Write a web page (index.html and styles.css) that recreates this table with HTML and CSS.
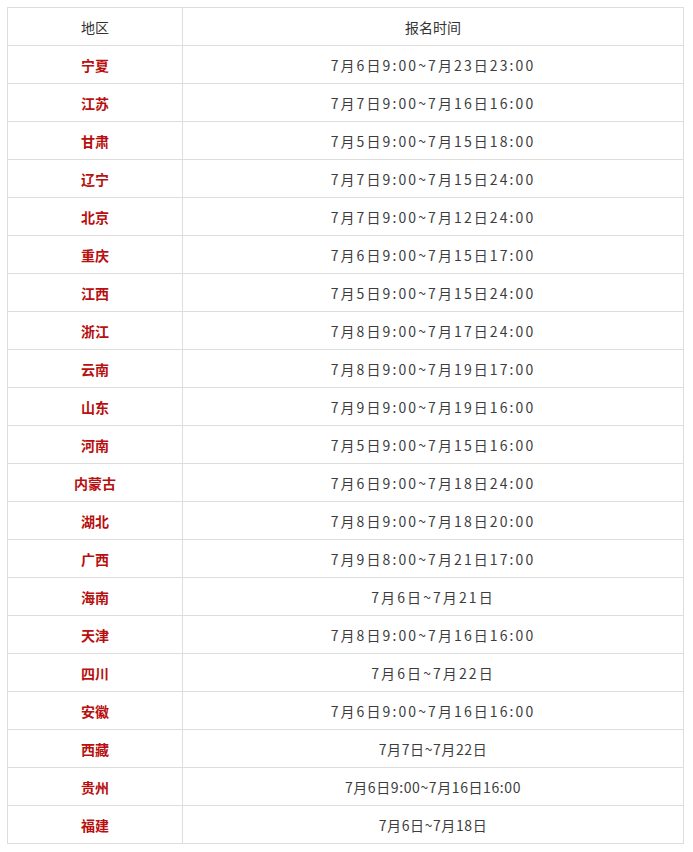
FILE: index.html
```html
<!DOCTYPE html>
<html lang="zh">
<head>
<meta charset="utf-8">
<link rel="stylesheet" href="styles.css">
</head>
<body>
<table class="tbl">
  <thead>
    <tr><th class="c-region">地区</th><th class="c-time">报名时间</th></tr>
  </thead>
  <tbody>
    <tr><td class="region">宁夏</td><td class="time">7月6日9:00~7月23日23:00</td></tr>
    <tr><td class="region">江苏</td><td class="time">7月7日9:00~7月16日16:00</td></tr>
    <tr><td class="region">甘肃</td><td class="time">7月5日9:00~7月15日18:00</td></tr>
    <tr><td class="region">辽宁</td><td class="time">7月7日9:00~7月15日24:00</td></tr>
    <tr><td class="region">北京</td><td class="time">7月7日9:00~7月12日24:00</td></tr>
    <tr><td class="region">重庆</td><td class="time">7月6日9:00~7月15日17:00</td></tr>
    <tr><td class="region">江西</td><td class="time">7月5日9:00~7月15日24:00</td></tr>
    <tr><td class="region">浙江</td><td class="time">7月8日9:00~7月17日24:00</td></tr>
    <tr><td class="region">云南</td><td class="time">7月8日9:00~7月19日17:00</td></tr>
    <tr><td class="region">山东</td><td class="time">7月9日9:00~7月19日16:00</td></tr>
    <tr><td class="region">河南</td><td class="time">7月5日9:00~7月15日16:00</td></tr>
    <tr><td class="region">内蒙古</td><td class="time">7月6日9:00~7月18日24:00</td></tr>
    <tr><td class="region">湖北</td><td class="time">7月8日9:00~7月18日20:00</td></tr>
    <tr><td class="region">广西</td><td class="time">7月9日8:00~7月21日17:00</td></tr>
    <tr><td class="region">海南</td><td class="time">7月6日~7月21日</td></tr>
    <tr><td class="region">天津</td><td class="time">7月8日9:00~7月16日16:00</td></tr>
    <tr><td class="region">四川</td><td class="time">7月6日~7月22日</td></tr>
    <tr><td class="region">安徽</td><td class="time">7月6日9:00~7月16日16:00</td></tr>
    <tr><td class="region">西藏</td><td class="time tight">7月7日~7月22日</td></tr>
    <tr><td class="region">贵州</td><td class="time tight">7月6日9:00~7月16日16:00</td></tr>
    <tr><td class="region">福建</td><td class="time tight">7月6日~7月18日</td></tr>
  </tbody>
</table>
</body>
</html>
```

FILE: styles.css
```css
html, body {
  margin: 0;
  padding: 0;
  background: #fff;
}
body {
  padding: 7px 0 0 7px;
  font-family: "Noto Sans CJK SC", "Noto Sans", sans-serif;
  font-size: 14px;
  color: #333;
}
.tbl {
  border-collapse: collapse;
  width: 677px;
  table-layout: fixed;
}
.tbl th, .tbl td {
  border: 1px solid #dddddd;
  height: 38px;
  padding: 0;
  text-align: center;
  vertical-align: middle;
  line-height: 20px;
  box-sizing: border-box;
}
.tbl th {
  font-weight: normal;
  color: #333;
}
.c-region { width: 175px; }
.region {
  color: #b80f0f;
  font-weight: bold;
}
.time {
  color: #3d3d3d;
  letter-spacing: 2.1px;
}
.time.tight {
  letter-spacing: 0.6px;
}
```
